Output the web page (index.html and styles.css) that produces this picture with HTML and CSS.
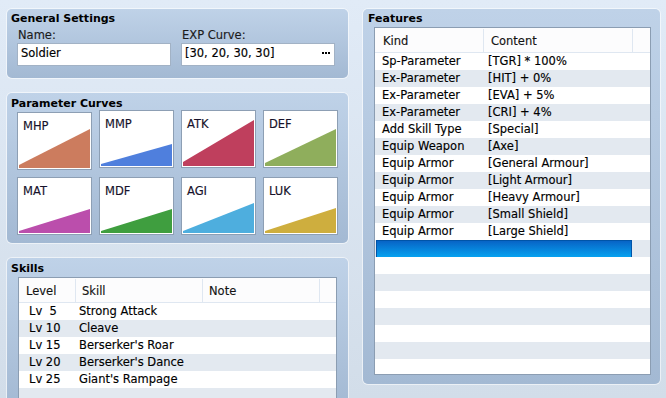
FILE: index.html
```html
<!DOCTYPE html>
<html>
<head>
<meta charset="utf-8">
<link rel="stylesheet" href="styles.css">
</head>
<body>
<div class="app">
  <div class="col-left">
    <section class="panel general">
      <h2 class="panel-title">General Settings</h2>
      <div class="fields">
        <div class="field">
          <span class="field-label">Name:</span>
          <span class="input">Soldier</span>
        </div>
        <div class="field">
          <span class="field-label">EXP Curve:</span>
          <span class="input"><span>[30, 20, 30, 30]</span><svg class="dots" width="8" height="2" viewBox="0 0 8 2"><rect x="0" y="0" width="2" height="2"/><rect x="3" y="0" width="2" height="2"/><rect x="6" y="0" width="2" height="2"/></svg></span>
        </div>
      </div>
    </section>

    <section class="panel params">
      <h2 class="panel-title">Parameter Curves</h2>
      <div class="curves">
        <div class="curve pressed"><span class="curve-label">MHP</span><svg class="chart" viewBox="0 0 71 54" preserveAspectRatio="none"><polygon fill="#cc7c5e" points="0,54 0,51 71,15 71,54"/></svg></div>
        <div class="curve"><span class="curve-label">MMP</span><svg class="chart" viewBox="0 0 71 54" preserveAspectRatio="none"><polygon fill="#4f7fdd" points="0,54 0,52 71,32 71,54"/></svg></div>
        <div class="curve"><span class="curve-label">ATK</span><svg class="chart" viewBox="0 0 71 54" preserveAspectRatio="none"><polygon fill="#bf3f5d" points="0,54 0,50 71,8 71,54"/></svg></div>
        <div class="curve"><span class="curve-label">DEF</span><svg class="chart" viewBox="0 0 71 54" preserveAspectRatio="none"><polygon fill="#8fae5c" points="0,54 0,51 71,17 71,54"/></svg></div>
        <div class="curve"><span class="curve-label">MAT</span><svg class="chart" viewBox="0 0 71 54" preserveAspectRatio="none"><polygon fill="#bb4eac" points="0,54 0,52 71,30 71,54"/></svg></div>
        <div class="curve"><span class="curve-label">MDF</span><svg class="chart" viewBox="0 0 71 54" preserveAspectRatio="none"><polygon fill="#3f9e3f" points="0,54 0,52 71,30 71,54"/></svg></div>
        <div class="curve"><span class="curve-label">AGI</span><svg class="chart" viewBox="0 0 71 54" preserveAspectRatio="none"><polygon fill="#4eaede" points="0,54 0,52 71,24 71,54"/></svg></div>
        <div class="curve"><span class="curve-label">LUK</span><svg class="chart" viewBox="0 0 71 54" preserveAspectRatio="none"><polygon fill="#ceae3e" points="0,54 0,52 71,29 71,54"/></svg></div>
      </div>
    </section>

    <section class="panel skills">
      <h2 class="panel-title">Skills</h2>
      <div class="list skills-list">
        <div class="list-head">
          <span class="hcell hc-level">Level</span>
          <span class="hcell hc-skill">Skill</span>
          <span class="hcell hc-note">Note</span>
          <span class="hcell hc-rest"></span>
        </div>
        <div class="row"><span class="c-level">Lv  5</span><span class="c-skill">Strong Attack</span></div>
        <div class="row"><span class="c-level">Lv 10</span><span class="c-skill">Cleave</span></div>
        <div class="row"><span class="c-level">Lv 15</span><span class="c-skill">Berserker's Roar</span></div>
        <div class="row"><span class="c-level">Lv 20</span><span class="c-skill">Berserker's Dance</span></div>
        <div class="row"><span class="c-level">Lv 25</span><span class="c-skill">Giant's Rampage</span></div>
        <div class="row"></div>
        <div class="row"></div>
      </div>
    </section>
  </div>

  <section class="panel features">
    <h2 class="panel-title">Features</h2>
    <div class="list feat-list">
      <div class="list-head">
        <span class="hcell hc-kind">Kind</span>
        <span class="hcell hc-content">Content</span>
        <span class="hcell hc-rest"></span>
      </div>
      <div class="row"><span class="c-kind">Sp-Parameter</span><span class="c-content">[TGR] * 100%</span></div>
      <div class="row"><span class="c-kind">Ex-Parameter</span><span class="c-content">[HIT] + 0%</span></div>
      <div class="row"><span class="c-kind">Ex-Parameter</span><span class="c-content">[EVA] + 5%</span></div>
      <div class="row"><span class="c-kind">Ex-Parameter</span><span class="c-content">[CRI] + 4%</span></div>
      <div class="row"><span class="c-kind">Add Skill Type</span><span class="c-content">[Special]</span></div>
      <div class="row"><span class="c-kind">Equip Weapon</span><span class="c-content">[Axe]</span></div>
      <div class="row"><span class="c-kind">Equip Armor</span><span class="c-content">[General Armour]</span></div>
      <div class="row"><span class="c-kind">Equip Armor</span><span class="c-content">[Light Armour]</span></div>
      <div class="row"><span class="c-kind">Equip Armor</span><span class="c-content">[Heavy Armour]</span></div>
      <div class="row"><span class="c-kind">Equip Armor</span><span class="c-content">[Small Shield]</span></div>
      <div class="row"><span class="c-kind">Equip Armor</span><span class="c-content">[Large Shield]</span></div>
      <div class="row"><span class="sel-bar"></span></div>
      <div class="row"></div>
      <div class="row"></div>
      <div class="row"></div>
      <div class="row"></div>
      <div class="row"></div>
      <div class="row"></div>
      <div class="row"></div>
    </div>
  </section>
</div>
</body>
</html>
```

FILE: styles.css
```css
html, body {
  margin: 0;
  height: 398px;
  overflow: hidden;
}

body {
  background: linear-gradient(#e1ebf7, #d2dde9);
  font-family: "DejaVu Sans", Verdana, sans-serif;
  font-size: 11.5px;
  color: #000;
  -webkit-text-stroke: 0.15px currentColor;
}

.app {
  display: grid;
  grid-template-columns: 341px 297px;
  column-gap: 15px;
  padding: 9px 0 0 7px;
  height: 398px;
  box-sizing: border-box;
  overflow: hidden;
  align-items: start;
}

.col-left {
  display: flex;
  flex-direction: column;
  gap: 15px;
}

.panel {
  border-radius: 5px;
  background: linear-gradient(#bfd2e8, #a3b9d3);
  box-shadow: 0 0 0 1px rgba(255, 255, 255, 0.55);
  padding: 3px 10px 0 10px;
  box-sizing: border-box;
}

.panel-title {
  margin: 0 0 0 -6px;
  font-size: 11px;
  font-weight: bold;
  line-height: 14px;
  color: #000;
  -webkit-text-stroke: 0;
}

/* General settings */
.general {
  height: 69px;
}

.fields {
  display: grid;
  grid-template-columns: 154px 154px;
  column-gap: 10px;
  margin-top: 2px;
}

.field-label {
  display: block;
  line-height: 14px;
  padding-left: 1px;
  margin-bottom: 1px;
  color: #1b1b1b;
}

.input {
  display: flex;
  justify-content: space-between;
  align-items: center;
  box-sizing: border-box;
  height: 23px;
  border: 1px solid #a2b2c5;
  background: #fff;
  padding: 2px 4px 5px 3px;
  line-height: 14px;
}

.dots {
  fill: #000;
  display: block;
}

/* Parameter curves */
.params {
  height: 150px;
  padding-top: 4px;
}

.params .panel-title {
  margin-bottom: -1px;
}

.curves {
  display: grid;
  grid-template-columns: repeat(4, 75px);
  grid-auto-rows: 58px;
  column-gap: 7px;
  row-gap: 9px;
}

.curve {
  display: grid;
  box-sizing: border-box;
  border: 1px solid #8d9fb4;
  background: #fff;
  padding: 1px;
}

.curve.pressed {
  transform: translateY(2px);
}

.curve-label,
.chart {
  grid-area: 1 / 1;
}

.chart {
  width: 71px;
  height: 54px;
  display: block;
}

.curve-label {
  z-index: 1;
  padding: 5px 0 0 4px;
  line-height: 14px;
  color: #16122a;
}

/* Lists */
.list {
  border: 1px solid #8b9db2;
  background: #fff;
  overflow: hidden;
}

.list-head {
  display: grid;
  height: 24px;
  border-bottom: 1px solid #dfe7f1;
  background: #fcfcfd;
}

.hcell {
  border-right: 1px solid #dfe7f1;
  margin-top: 1px;
  padding: 1px 0 0 7px;
  line-height: 22px;
  white-space: nowrap;
  color: #141414;
}

.hc-rest {
  border-right: none;
}

.row {
  display: grid;
  height: 17px;
  line-height: 17px;
  white-space: pre;
}

.row:nth-child(odd) {
  background: #e3e9f0;
}

/* Skills */
.skills {
  height: 150px;
  padding-top: 4px;
  padding-right: 11px;
}

.skills-list {
  margin: 1px 0 0 1px;
}

.skills-list .list-head,
.skills-list .row {
  grid-template-columns: 57px 127px 117px 1fr;
}

.hc-skill,
.hc-note {
  padding-left: 6px;
}

.c-level {
  padding-left: 10px;
}

.c-skill {
  padding-left: 3px;
}

/* Features */
.features {
  height: 375px;
  display: flex;
  flex-direction: column;
  padding: 3px 9px 9px 10px;
}

.features .panel-title {
  margin-left: -5px;
}

.feat-list {
  flex: 1;
  min-height: 0;
  margin: 1px 0 0 1px;
}

.feat-list .list-head,
.feat-list .row {
  grid-template-columns: 109px 149px 1fr;
}

.hc-kind {
  padding-left: 8px;
}

.c-kind {
  padding-left: 7px;
}

.c-content {
  padding-left: 4px;
}

.sel-bar {
  grid-column: 1 / 3;
  margin-left: 1px;
  margin-right: 1px;
  box-sizing: border-box;
  border: 1px solid #0054a8;
  border-bottom: none;
  background: linear-gradient(#0864c6, #06a2f0);
}
```
